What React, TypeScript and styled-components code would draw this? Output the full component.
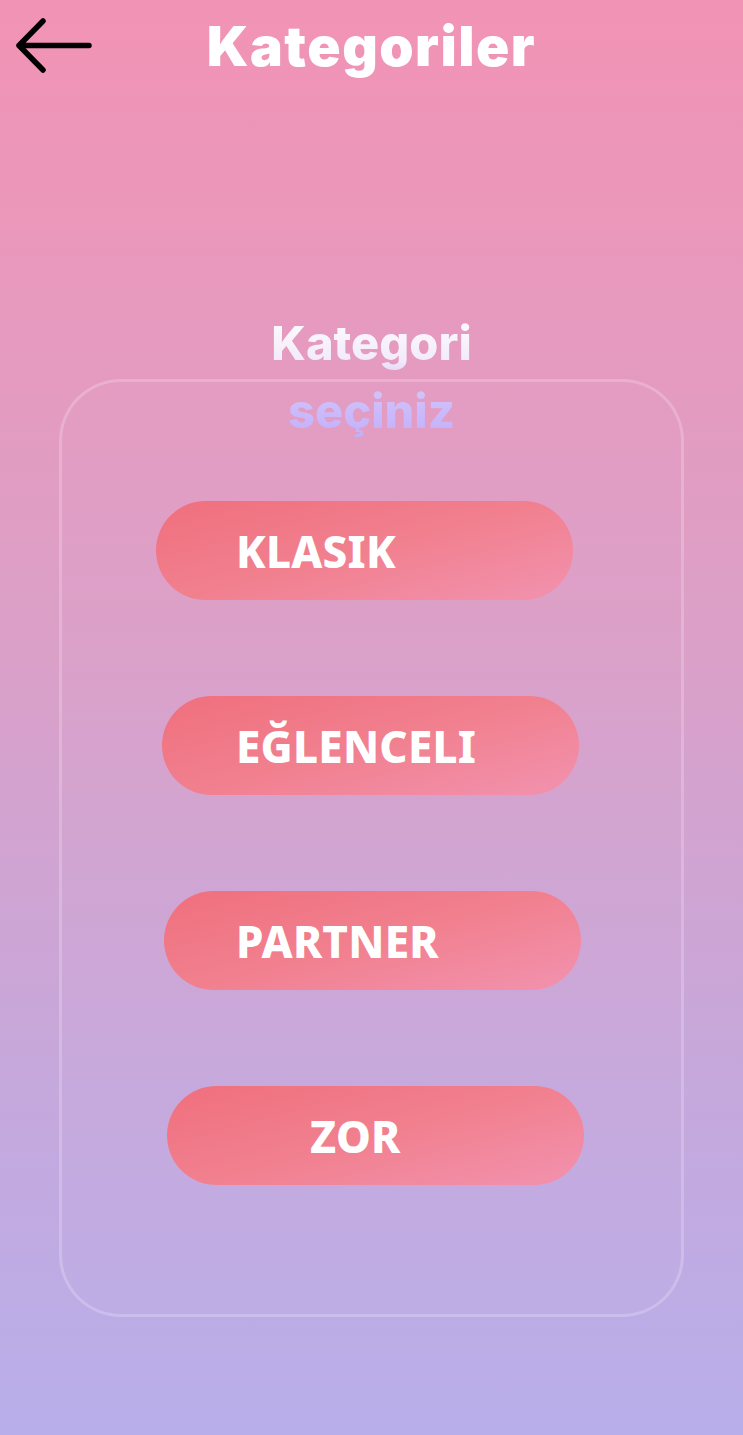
import React from "react";
import styled, { createGlobalStyle } from "styled-components";

const Global = createGlobalStyle`
  html, body { margin: 0; padding: 0; }
  body { font-family: "Inter", "Noto Sans", sans-serif; }
  * { box-sizing: border-box; }
`;

const Page = styled.div`
  width: 743px;
  min-height: 1435px;
  background: linear-gradient(180deg, #f293b4 0%, #dba0c8 45%, #c6a8dc 75%, #b8aeea 100%);
  display: flex;
  flex-direction: column;
  align-items: center;
`;

const Header = styled.header`
  width: 100%;
  height: 96px;
  display: grid;
  grid-template-columns: 1fr auto 1fr;
  align-items: start;
`;

const BackButton = styled.button`
  justify-self: start;
  margin: 16px 0 0 14px;
  padding: 0;
  border: 0;
  background: none;
  width: 82px;
  height: 60px;
  display: flex;
  align-items: center;
  cursor: pointer;
`;

const Title = styled.h1`
  margin: 6px 0 0;
  font-family: "Inter", sans-serif;
  font-weight: 900;
  font-size: 55px;
  letter-spacing: 1.5px;
  color: #ffffff;
  line-height: 80px;
`;

const Heading = styled.h2`
  margin: 213px 0 0;
  width: 240px;
  text-align: center;
  font-family: "Inter", sans-serif;
  font-weight: 800;
  font-size: 47px;
  line-height: 68px;
  background: linear-gradient(180deg, #ffffff 0%, #f2eafa 38%, #d4c6fb 55%, #bfacfa 100%);
  -webkit-background-clip: text;
  background-clip: text;
  color: transparent;
  position: relative;
  z-index: 1;
`;

const Card = styled.section`
  margin-top: -66px;
  width: 625px;
  border: 3px solid rgba(255, 255, 255, 0.2);
  border-radius: 62px;
  background: rgba(255, 255, 255, 0.02);
  padding: 119px 0 129px;
  display: flex;
  flex-direction: column;
  align-items: flex-start;
  gap: 96px;
`;

const CategoryButton = styled.button<{ $offset: number; $indent: number }>`
  margin-left: ${(p) => p.$offset}px;
  width: 417px;
  height: 99px;
  border: 0;
  border-radius: 50px;
  background: linear-gradient(165deg, #f06f7d 0%, #f1808f 50%, #f292af 100%);
  display: flex;
  align-items: center;
  padding: 0 0 0 ${(p) => p.$indent}px;
  font-family: "Noto Sans", sans-serif;
  font-weight: 800;
  font-size: 44px;
  color: #ffffff;
  letter-spacing: 0.2px;
  cursor: pointer;
`;

const categories = [
  { label: "KLASIK", offset: 94, indent: 80 },
  { label: "EĞLENCELI", offset: 100, indent: 74 },
  { label: "PARTNER", offset: 102, indent: 72 },
  { label: "ZOR", offset: 105, indent: 143 },
];

export default function App() {
  return (
    <>
      <Global />
      <Page>
        <Header>
          <BackButton aria-label="Geri">
            <svg width="82" height="60" viewBox="0 0 82 60" fill="none">
              <path
                d="M5 29.5H75M29 5L5 29.5L29 54"
                stroke="#000"
                strokeWidth="5.5"
                strokeLinecap="round"
                strokeLinejoin="round"
              />
            </svg>
          </BackButton>
          <Title>Kategoriler</Title>
          <div />
        </Header>
        <Heading>Kategori seçiniz</Heading>
        <Card>
          {categories.map((c) => (
            <CategoryButton key={c.label} $offset={c.offset} $indent={c.indent}>
              {c.label}
            </CategoryButton>
          ))}
        </Card>
      </Page>
    </>
  );
}
